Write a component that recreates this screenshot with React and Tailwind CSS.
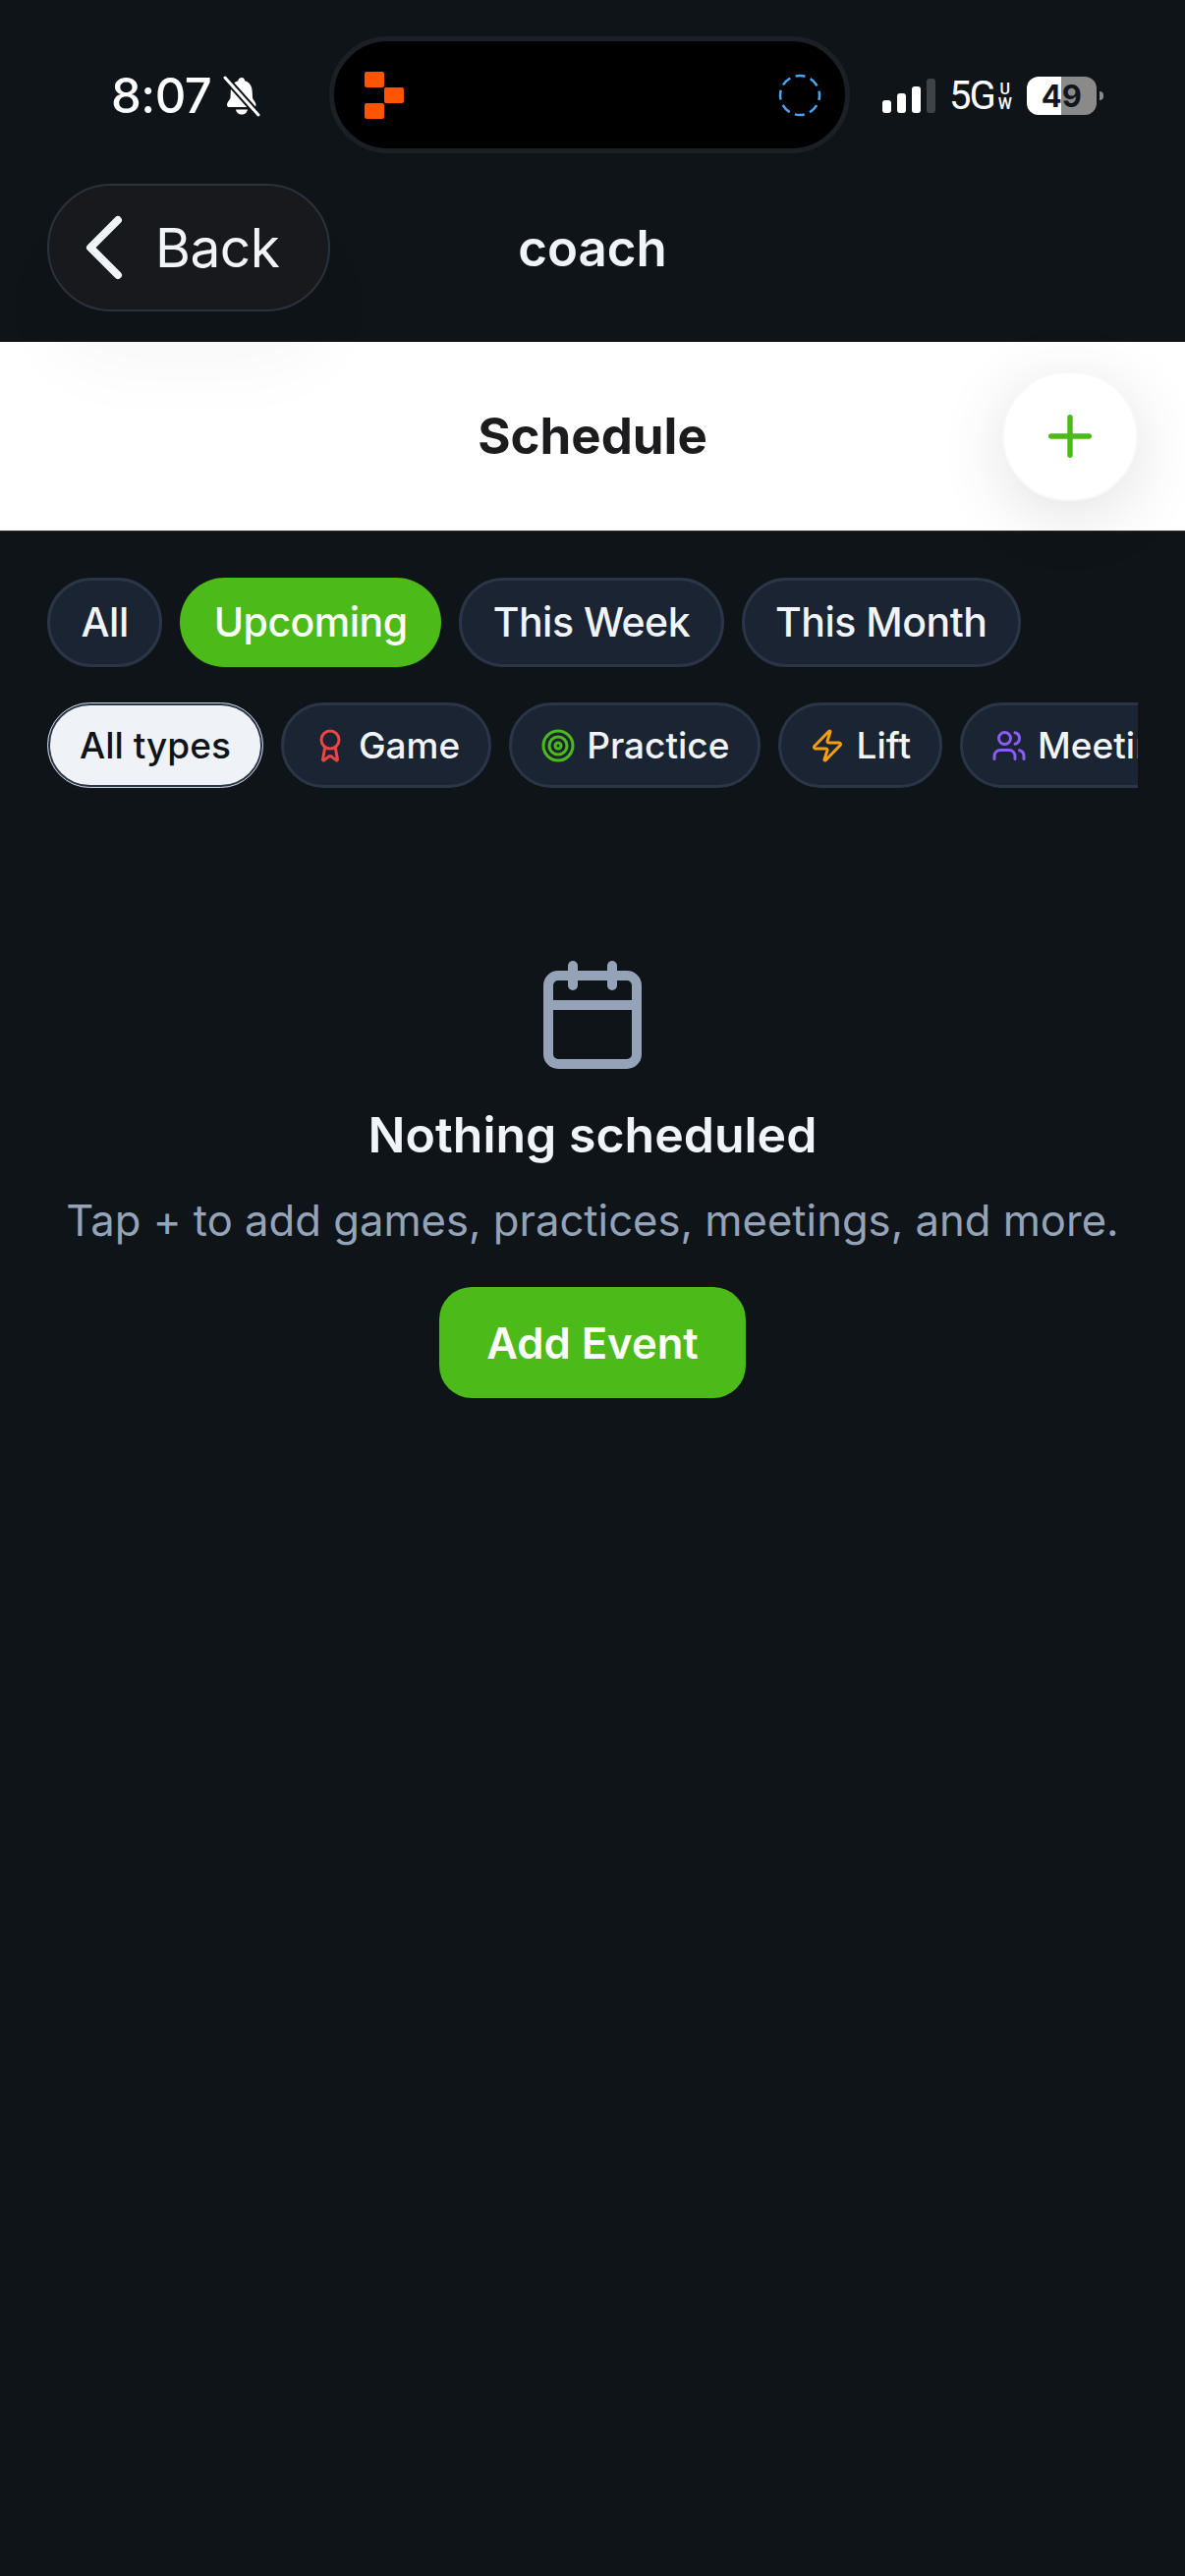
import { Award, Calendar, ChevronLeft, Plus, Target, Users, Zap } from 'lucide-react';

const ranges = ['All', 'Upcoming', 'This Week', 'This Month'];

const types = [
  { label: 'Game', icon: Award, color: 'text-[#ef4444]' },
  { label: 'Practice', icon: Target, color: 'text-[#4cba19]' },
  { label: 'Lift', icon: Zap, color: 'text-[#f59e0b]' },
  { label: 'Meeting', icon: Users, color: 'text-[#8b5cf6]' },
];

function StatusBar() {
  return (
    <div className="flex items-center h-[119px] pl-[113px]">
      <div className="flex items-center w-[222px] mt-[2px]">
        <span className="text-[49px] leading-none font-medium text-white tracking-[-0.5px]">8:07</span>
        <svg className="ml-[12px]" width="38" height="42" viewBox="0 0 38 42">
          <path d="M19 2c2 0 3 1.500 3.200 3.200 5 1.500 7.300 5.500 7.500 11l.3 6c.2 2.500 3.500 4.500 3.500 7.500 0 1.500-1 2.300-2.500 2.300H6.500C5 32 4 31.200 4 29.700c0-3 3.300-5 3.500-7.500l.3-6c.2-5.500 2.500-9.500 7.500-11C15.500 3.500 17 2 19 2z" fill="#fff" />
          <path d="M13 34.500h12c-.5 3-3 5-6 5s-5.500-2-6-5z" fill="#fff" />
          <path d="M2 2l34 38" stroke="#0f1419" strokeWidth="7" />
          <path d="M2 2l34 38" stroke="#fff" strokeWidth="3" strokeLinecap="round" />
        </svg>
      </div>

      <div className="flex items-center justify-between w-[530px] h-[119px] rounded-full bg-black border-[5px] border-[#1a2026] pl-[31px] pr-[24px]">
        <svg width="40" height="48" viewBox="0 0 40 48" fill="#ff5500">
          <rect x="0" y="0" width="20" height="16" rx="2" />
          <rect x="20" y="16" width="20" height="16" rx="2" />
          <rect x="0" y="32" width="20" height="16" rx="2" />
        </svg>
        <svg width="44" height="44" viewBox="0 0 44 44" fill="none">
          <circle cx="22" cy="22" r="20" stroke="#4aa5f0" strokeWidth="2.500" strokeDasharray="10 5.700" strokeDashoffset="5" />
        </svg>
      </div>

      <div className="flex items-end gap-[6px] h-[35px] ml-[33px] mt-[2px]">
        <div className="w-[9px] h-[13px] rounded-[3px] bg-white" />
        <div className="w-[9px] h-[20px] rounded-[3px] bg-white" />
        <div className="w-[9px] h-[27px] rounded-[3px] bg-white" />
        <div className="w-[9px] h-[35px] rounded-[3px] bg-[#3f4347]" />
      </div>
      <span className="ml-[14px] mt-[2px] font-['Roboto'] text-[40px] leading-none text-white tracking-[-2px]">5G</span>
      <div className="flex flex-col items-center ml-[4px] mt-[2px] font-['Roboto'] text-[16px] leading-[15px] font-medium text-white">
        <span>U</span>
        <span>W</span>
      </div>
      <div className="flex items-center justify-center ml-[15px] mt-[2px] w-[71px] h-[39px] rounded-[12px] bg-[linear-gradient(90deg,#ffffff_49%,#8a8a8a_49%)] text-[31px] leading-none font-bold text-[#12161b]">
        49
      </div>
      <div className="ml-[3px] mt-[2px] w-[4px] h-[9px] rounded-r-full bg-[#8a8a8a]" />
    </div>
  );
}

function Header() {
  return (
    <div className="relative z-10 grid grid-cols-[1fr_auto_1fr] items-center mt-[31px] px-[48px] h-[130px]">
      <button className="flex items-center justify-self-start w-[288px] h-[130px] rounded-full bg-[#17191d] border-[2px] border-[#2b323c] shadow-[0_60px_70px_rgba(0,0,0,0.03)] text-[#f1f4f9]">
        <ChevronLeft size={112} strokeWidth={1.7} className="shrink-0" />
        <span className="ml-[-4px] text-[55px] leading-none tracking-[-0.5px]">Back</span>
      </button>
      <span className="text-[51px] leading-none font-semibold text-[#f1f4f9]">coach</span>
      <div />
    </div>
  );
}

function ScheduleBar() {
  return (
    <div className="relative grid grid-cols-[1fr_auto_1fr] items-center mt-[31px] h-[193px] px-[48px] bg-white border-b border-[#2a2f35]">
      <div />
      <h1 className="mb-[2px] text-[51px] leading-none font-bold text-[#1c1c1e]">Schedule</h1>
      <button className="flex items-center justify-center justify-self-end w-[138px] h-[132px] rounded-full bg-white border-[2px] border-[#f8f8f8] shadow-[0_14px_70px_rgba(0,0,0,0.12)] text-[#4cba19]">
        <Plus size={66} strokeWidth={2} />
      </button>
    </div>
  );
}

function Filters() {
  return (
    <div className="px-[48px] pt-[47px]">
      <div className="flex gap-[18px]">
        {ranges.map((r) => (
          <button
            key={r}
            className={
              r === 'Upcoming'
                ? 'h-[91px] px-[34.5px] rounded-full bg-[#4cba19] text-white text-[41px] leading-none font-medium tracking-[-0.5px]'
                : 'h-[91px] px-[31.5px] rounded-full bg-[#1a2433] border-[3px] border-[#2a3648] text-[#f1f5f9] text-[41px] leading-none font-medium tracking-[-0.5px]'
            }
          >
            {r}
          </button>
        ))}
      </div>

      <div className="flex gap-[18px] mt-[36px] overflow-hidden">
        <button className="shrink-0 h-[87px] px-[30px] rounded-full bg-[#eff3f8] border-[3px] border-[#2a3648] outline outline-1 -outline-offset-1 outline-[#cbd5e1] text-[#0f1419] text-[37px] leading-none font-medium">
          All types
        </button>
        {types.map(({ label, icon: Icon, color }) => (
          <button
            key={label}
            className="flex shrink-0 items-center gap-[11px] h-[87px] pl-[29px] pr-[29px] rounded-full bg-[#1a2433] border-[3px] border-[#2a3648] text-[#f1f5f9] text-[37px] leading-none font-medium"
          >
            <Icon size={36} strokeWidth={2} className={color} />
            {label}
          </button>
        ))}
      </div>
    </div>
  );
}

function EmptyState() {
  return (
    <div className="flex flex-col items-center mt-[171px]">
      <Calendar size={120} strokeWidth={2} className="text-[#94a3b8]" />
      <h2 className="mt-[32px] text-[50px] leading-[60px] font-semibold text-[#f1f5f9]">Nothing scheduled</h2>
      <p className="mt-[28px] text-[43.6px] leading-[60px] text-[#94a3b8]">Tap + to add games, practices, meetings, and more.</p>
      <button className="mt-[37px] w-[312px] h-[113px] pt-[2px] rounded-[33px] bg-[#4cba19] text-white text-[43.6px] leading-none font-semibold">
        Add Event
      </button>
    </div>
  );
}

export default function App() {
  return (
    <div className="min-h-screen bg-[#0f1419] pt-[37px] font-['Inter',sans-serif]">
      <StatusBar />
      <Header />
      <ScheduleBar />
      <Filters />
      <EmptyState />
    </div>
  );
}
